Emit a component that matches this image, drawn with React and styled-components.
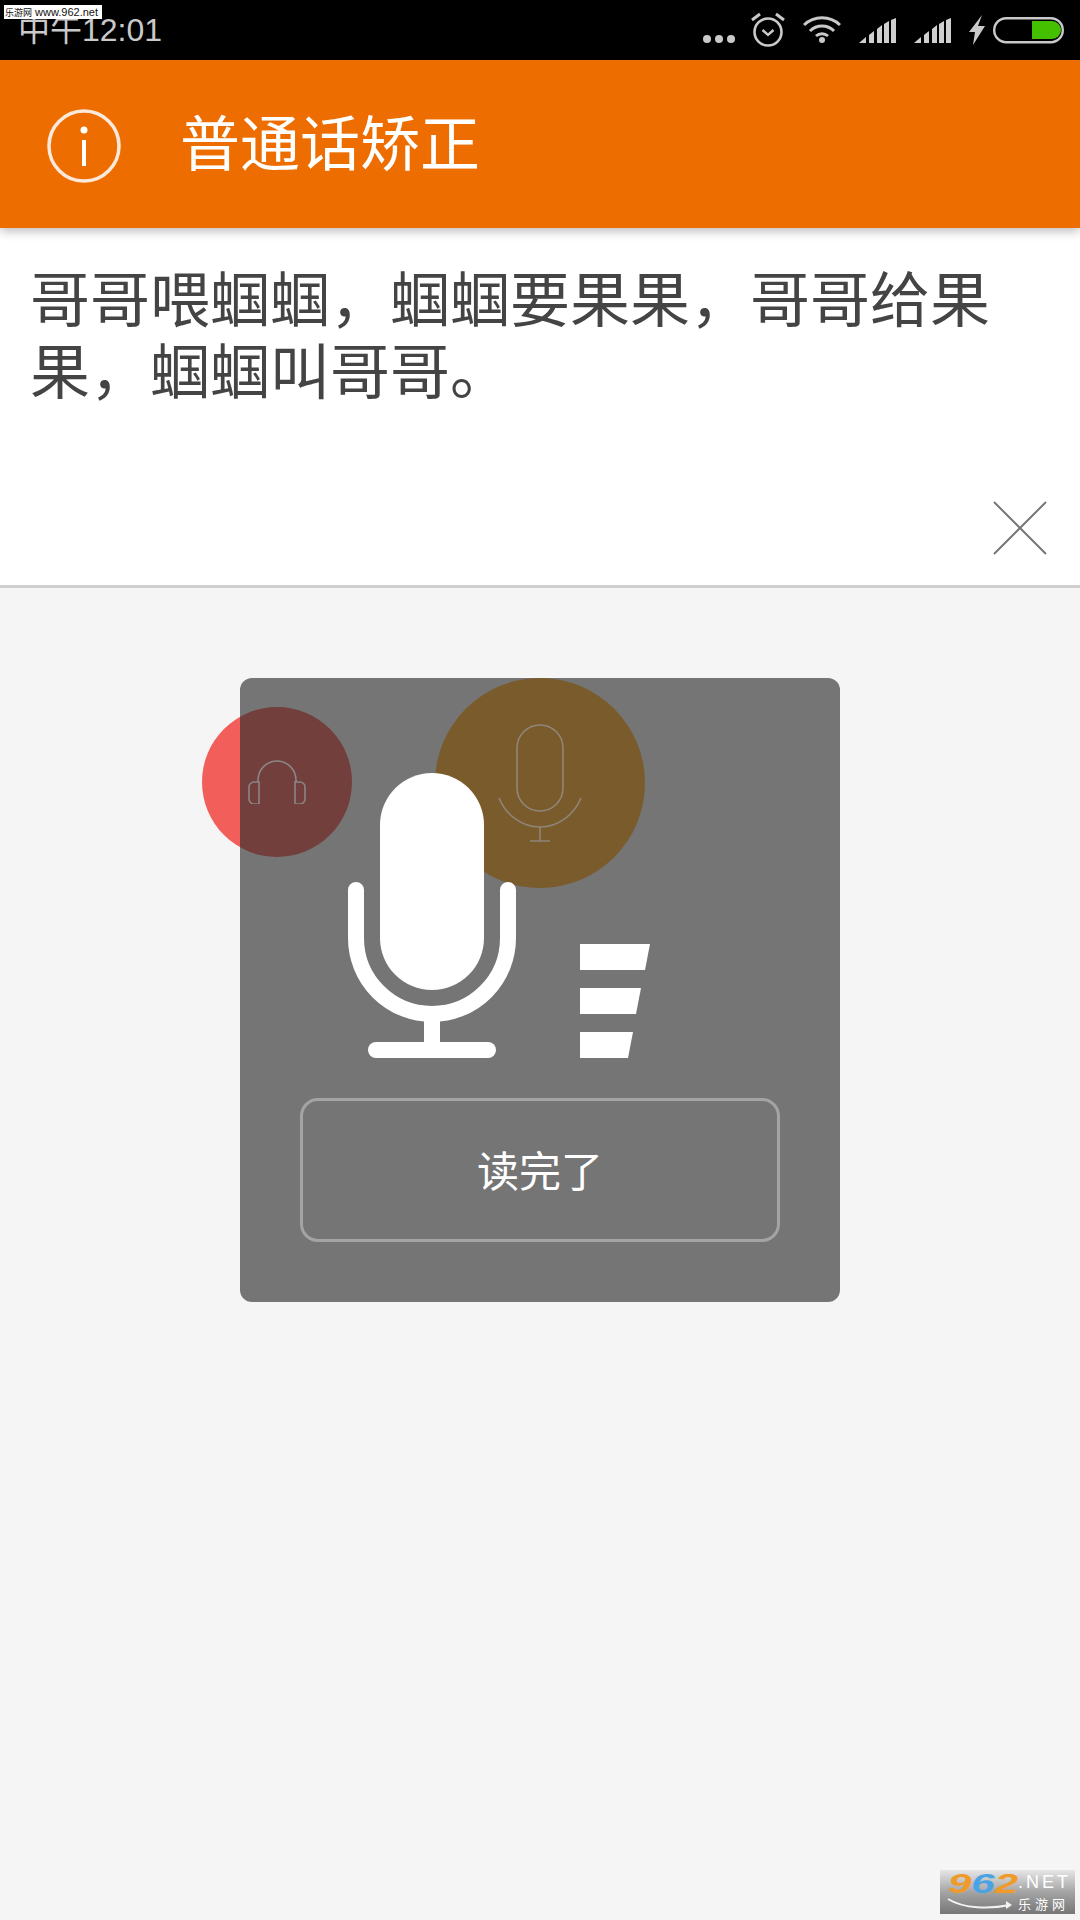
import styled, { createGlobalStyle } from 'styled-components'

const CJK = `"Noto Sans CJK SC", "Noto Sans", sans-serif`

const Global = createGlobalStyle`
  html, body {
    margin: 0;
    padding: 0;
    background: #f5f5f5;
  }
  * { box-sizing: border-box; }
`

const Page = styled.div`
  position: relative;
  width: 1080px;
  height: 1920px;
  overflow: hidden;
  background: #f5f5f5;
  font-family: ${CJK};
`

const StatusBar = styled.div`
  position: relative;
  display: flex;
  align-items: center;
  height: 60px;
  padding: 0 16px 0 18px;
  background: #000;
  color: #c9c9c9;
`

const Time = styled.span`
  font-family: "Liberation Sans", ${CJK};
  font-size: 32px;
  line-height: 60px;
`

const Watermark = styled.div`
  position: absolute;
  top: 5px;
  left: 4px;
  width: 98px;
  height: 14px;
  background: #fff;
  color: #111;
  font-family: "Liberation Sans", ${CJK};
  font-size: 11px;
  line-height: 14px;
  white-space: nowrap;
  padding-left: 1px;
`

const WatermarkName = styled.span`
  font-size: 9px;
  margin-right: 3px;
`

const StatusIcons = styled.div`
  display: flex;
  align-items: center;
  gap: 18px;
  margin-left: auto;
  svg { display: block; }
`

const Dots = styled.svg`
  margin-right: -2px;
`

const Bolt = styled.svg`
  margin-right: -10px;
`

const AppBar = styled.header`
  position: relative;
  z-index: 1;
  display: flex;
  align-items: center;
  height: 168px;
  padding: 4px 0 0 47px;
  background: #ee6d00;
  box-shadow: 0 3px 10px rgba(0, 0, 0, 0.28);
`

const Title = styled.h1`
  margin: 0 0 12px 59px;
  color: #fff;
  font-size: 60px;
  font-weight: 400;
  line-height: 72px;
`

const Sentence = styled.section`
  position: relative;
  height: 360px;
  padding: 32px 30px 0;
  background: #fff;
  border-bottom: 3px solid #cfcfcf;
  color: #444;
  font-size: 60px;
  line-height: 72px;
`

const CloseIcon = styled.svg`
  position: absolute;
  right: 33px;
  bottom: 30px;
`

const Card = styled.div`
  position: relative;
  display: flex;
  flex-direction: column;
  width: 600px;
  height: 624px;
  margin: 90px auto 0;
  padding: 95px 60px 0;
  border-radius: 12px;
  background: #757575;
`

const Bubble = styled.div`
  position: absolute;
  top: ${p => p.$top}px;
  left: ${p => p.$left}px;
  display: flex;
  align-items: center;
  justify-content: center;
  width: ${p => p.$size}px;
  height: ${p => p.$size}px;
  border-radius: 50%;
  background: ${p => p.$bg};
`

const Recorder = styled.div`
  position: relative;
  display: flex;
  align-items: flex-end;
  gap: 64px;
  height: 285px;
  padding-left: 48px;
  svg { display: block; }
`

const DoneButton = styled.button`
  display: block;
  width: 480px;
  height: 144px;
  margin-top: 40px;
  border: 3px solid #a2a4a6;
  border-radius: 18px;
  background: transparent;
  color: #fff;
  font-family: ${CJK};
  font-size: 42px;
  padding: 0 0 4px;
`

const Logo = styled.div`
  position: absolute;
  right: 5px;
  bottom: 6px;
  display: flex;
  width: 135px;
  height: 44px;
  padding-left: 8px;
  background: linear-gradient(#e6e6e6, #a4a4a4 50%, #767676);
`

const LogoDigits = styled.div`
  width: 70px;
  height: 32px;
  font-family: "Liberation Sans", sans-serif;
  font-size: 28px;
  font-weight: 700;
  font-style: italic;
  line-height: 28px;
  color: #f09a2a;
  transform: scaleX(1.5);
  transform-origin: left top;
`

const BlueDigit = styled.span`
  color: #4aa3e4;
`

const LogoSide = styled.div`
  display: flex;
  flex-direction: column;
  align-items: flex-start;
  color: #fff;
  margin-top: 2px;
`

const LogoNet = styled.span`
  font-family: "Liberation Sans", sans-serif;
  font-size: 18px;
  line-height: 20px;
  letter-spacing: 3px;
`

const LogoName = styled.span`
  margin-top: 5px;
  font-size: 13px;
  line-height: 14px;
  letter-spacing: 4px;
  white-space: nowrap;
`

const Swoosh = styled.svg`
  position: absolute;
  left: 6px;
  bottom: 3px;
`

const Alarm = () => (
  <svg width="34" height="60" viewBox="0 0 34 60" fill="none" stroke="#c9c9c9">
    <circle cx="17" cy="32" r="13.5" strokeWidth="2.6" />
    <path d="M11.5 30l5.5 5 5.5-5" strokeWidth="2.4" />
    <path d="M1 20l8-6M33 20l-8-6" strokeWidth="3" />
  </svg>
)

const Wifi = () => (
  <svg width="38" height="60" viewBox="0 0 38 60" fill="none" stroke="#c9c9c9" strokeWidth="3">
    <path d="M1 25A26 26 0 0 1 37 25" />
    <path d="M7 31A17 17 0 0 1 31 31" />
    <path d="M13 36A9 9 0 0 1 25 36" />
    <circle cx="19" cy="40" r="3" fill="#c9c9c9" stroke="none" />
  </svg>
)

const Signal = () => (
  <svg width="37" height="60" viewBox="0 0 37 60" fill="#cfcfcf">
    <polygon points="0,43 7,37 7,43" />
    <polygon points="10,35 15,31 15,43 10,43" />
    <polygon points="18,29 23,25 23,43 18,43" />
    <polygon points="25,24 30,21 30,43 25,43" />
    <polygon points="32,20 37,18 37,43 32,43" />
  </svg>
)

const MicBig = () => (
  <svg width="168" height="285" viewBox="0 0 168 285">
    <rect x="32" y="0" width="104" height="217" rx="52" fill="#fff" />
    <path
      d="M8 117V165A76 76 0 0 0 160 165V117"
      fill="none"
      stroke="#fff"
      strokeWidth="16"
      strokeLinecap="round"
    />
    <rect x="76" y="245" width="16" height="28" fill="#fff" />
    <rect x="20" y="269" width="128" height="16" rx="8" fill="#fff" />
  </svg>
)

const Level = () => (
  <svg width="70" height="114" viewBox="0 0 70 114" fill="#fff">
    <polygon points="0,0 70,0 65,26 0,26" />
    <polygon points="0,44 61,44 56,70 0,70" />
    <polygon points="0,88 53,88 48,114 0,114" />
  </svg>
)

export default function App() {
  return (
    <Page>
      <Global />
      <StatusBar>
        <Time>中午12:01</Time>
        <Watermark><WatermarkName>乐游网</WatermarkName>www.962.net</Watermark>
        <StatusIcons>
          <Dots width="32" height="60" viewBox="0 0 32 60" fill="#c9c9c9">
            <circle cx="4" cy="39" r="4" />
            <circle cx="16" cy="39" r="4" />
            <circle cx="28" cy="39" r="4" />
          </Dots>
          <Alarm />
          <Wifi />
          <Signal />
          <Signal />
          <Bolt width="16" height="60" viewBox="0 0 16 60" fill="#c9c9c9">
            <polygon points="13,15 0,32 6,32 4,45 16,26 9,26" />
          </Bolt>
          <svg width="71" height="60" viewBox="0 0 71 60">
            <rect x="1.2" y="18.2" width="68.6" height="24" rx="12" fill="none" stroke="#c9c9c9" strokeWidth="2.4" />
            <path d="M39 21H59A9 9 0 0 1 68 30V30A9 9 0 0 1 59 39H39Z" fill="#44c000" />
          </svg>
        </StatusIcons>
      </StatusBar>

      <AppBar>
        <svg width="74" height="74" viewBox="0 0 74 74" fill="none" stroke="#fff">
          <circle cx="37" cy="37" r="35" strokeWidth="3.5" opacity="0.85" />
          <circle cx="37" cy="21" r="3.5" fill="#fff" stroke="none" />
          <path d="M37 31V57" strokeWidth="4" />
        </svg>
        <Title>普通话矫正</Title>
      </AppBar>

      <Sentence>
        哥哥喂蝈蝈，蝈蝈要果果，哥哥给果果，蝈蝈叫哥哥。
        <CloseIcon width="54" height="54" viewBox="0 0 54 54" stroke="#777" strokeWidth="2" fill="none">
          <path d="M1 1L53 53M53 1L1 53" />
        </CloseIcon>
      </Sentence>

      <Card>
        <Bubble
          $top={29}
          $left={-38}
          $size={150}
          $bg="linear-gradient(to right, #f25f5a 38px, #723f3d 38px)"
        >
          <svg width="58" height="44" viewBox="0 0 58 44" fill="none" stroke="#8b8683" strokeWidth="1.6">
            <path d="M10 22V20A19 19 0 0 1 48 20V22" />
            <path d="M11 44H6A5 5 0 0 1 1 39V27A5 5 0 0 1 6 22H11Z" />
            <path d="M47 44H52A5 5 0 0 0 57 39V27A5 5 0 0 0 52 22H47Z" />
          </svg>
        </Bubble>
        <Bubble $top={0} $left={195} $size={210} $bg="#7a5b2c">
          <svg width="84" height="118" viewBox="0 0 84 118" fill="none" stroke="#8f8578" strokeWidth="1.6">
            <rect x="19" y="1" width="46" height="86" rx="23" />
            <path d="M1 74C8 91 24 103 42 103C60 103 76 91 83 74" />
            <path d="M42 103V117M32 117H52" />
          </svg>
        </Bubble>
        <Recorder>
          <MicBig />
          <Level />
        </Recorder>
        <DoneButton>读完了</DoneButton>
      </Card>

      <Logo>
        <LogoDigits>9<BlueDigit>6</BlueDigit>2</LogoDigits>
        <LogoSide>
          <LogoNet>.NET</LogoNet>
          <LogoName>乐游网</LogoName>
        </LogoSide>
        <Swoosh width="68" height="14" viewBox="0 0 68 14" fill="none" stroke="#f2f2f2" strokeWidth="2">
          <path d="M2 2C18 12 44 12 64 8" />
          <path d="M60 4L66 8L60 12" fill="#f2f2f2" stroke="none" />
        </Swoosh>
      </Logo>
    </Page>
  )
}
